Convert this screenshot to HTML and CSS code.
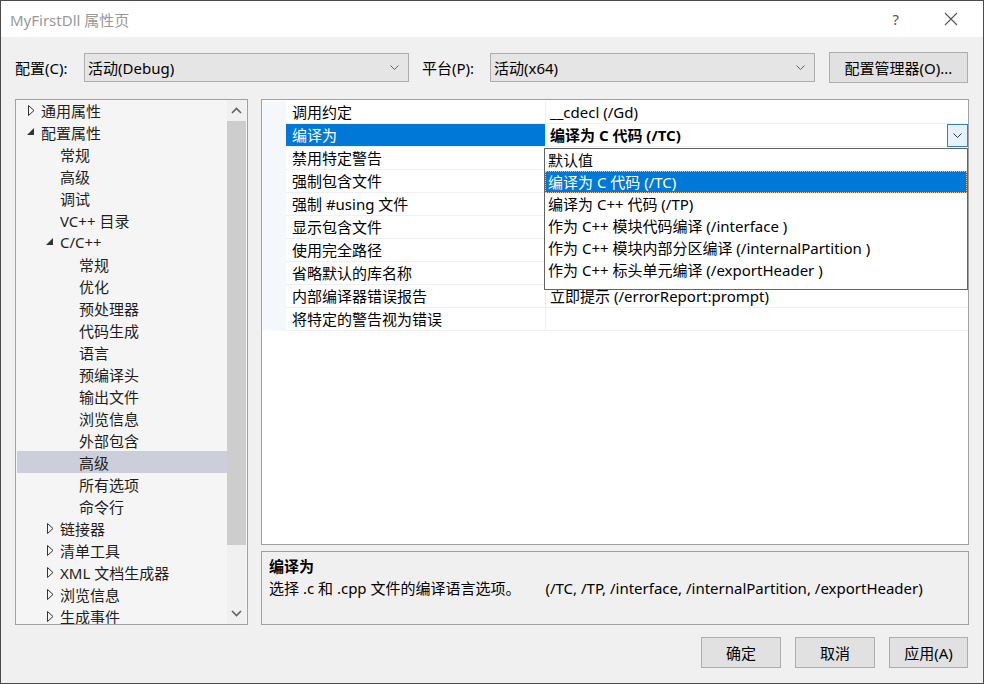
FILE: index.html
```html
<!DOCTYPE html>
<html lang="zh-CN">
<head>
  <meta charset="UTF-8">
  <title>MyFirstDll 属性页</title>
  <link rel="stylesheet" href="styles.css">
</head>
<body>
  <div class="window">
    <div class="titlebar">
      <span class="title">MyFirstDll 属性页</span>
      <span class="help">?</span>
      <svg class="close" width="14" height="14" viewBox="0 0 14 14"><path d="M1 1L13 13M13 1L1 13" stroke="#555" stroke-width="1.1" fill="none"/></svg>
    </div>

    <div class="config-row">
      <span class="label">配置(C):</span>
      <div class="combo">
        <span>活动(Debug)</span>
        <svg width="9" height="5" viewBox="0 0 9 5"><path d="M0.5 0.5L4.5 4.5L8.5 0.5" stroke="#606060" fill="none"/></svg>
      </div>
      <span class="label plat">平台(P):</span>
      <div class="combo">
        <span>活动(x64)</span>
        <svg width="9" height="5" viewBox="0 0 9 5"><path d="M0.5 0.5L4.5 4.5L8.5 0.5" stroke="#606060" fill="none"/></svg>
      </div>
      <button class="btn mgr">配置管理器(O)...</button>
    </div>

    <div class="main">
      <div class="tree">
        <ul class="tree-list">
          <li class="lvl0"><i class="tri"><svg width="7" height="11" viewBox="0 0 7 11"><path d="M0.5 0.5L6 5.5L0.5 10.5Z" stroke="#333" fill="none"/></svg></i>通用属性</li>
          <li class="lvl0"><i class="tri"><svg width="8" height="8" viewBox="0 0 8 8"><path d="M7 0L7 7L0 7Z" fill="#333"/></svg></i>配置属性</li>
          <li class="lvl1"><i class="tri"></i>常规</li>
          <li class="lvl1"><i class="tri"></i>高级</li>
          <li class="lvl1"><i class="tri"></i>调试</li>
          <li class="lvl1"><i class="tri"></i>VC++ 目录</li>
          <li class="lvl1"><i class="tri"><svg width="8" height="8" viewBox="0 0 8 8"><path d="M7 0L7 7L0 7Z" fill="#333"/></svg></i>C/C++</li>
          <li class="lvl2"><i class="tri"></i>常规</li>
          <li class="lvl2"><i class="tri"></i>优化</li>
          <li class="lvl2"><i class="tri"></i>预处理器</li>
          <li class="lvl2"><i class="tri"></i>代码生成</li>
          <li class="lvl2"><i class="tri"></i>语言</li>
          <li class="lvl2"><i class="tri"></i>预编译头</li>
          <li class="lvl2"><i class="tri"></i>输出文件</li>
          <li class="lvl2"><i class="tri"></i>浏览信息</li>
          <li class="lvl2"><i class="tri"></i>外部包含</li>
          <li class="lvl2 selected"><i class="tri"></i>高级</li>
          <li class="lvl2"><i class="tri"></i>所有选项</li>
          <li class="lvl2"><i class="tri"></i>命令行</li>
          <li class="lvl1"><i class="tri"><svg width="7" height="11" viewBox="0 0 7 11"><path d="M0.5 0.5L6 5.5L0.5 10.5Z" stroke="#333" fill="none"/></svg></i>链接器</li>
          <li class="lvl1"><i class="tri"><svg width="7" height="11" viewBox="0 0 7 11"><path d="M0.5 0.5L6 5.5L0.5 10.5Z" stroke="#333" fill="none"/></svg></i>清单工具</li>
          <li class="lvl1"><i class="tri"><svg width="7" height="11" viewBox="0 0 7 11"><path d="M0.5 0.5L6 5.5L0.5 10.5Z" stroke="#333" fill="none"/></svg></i>XML 文档生成器</li>
          <li class="lvl1"><i class="tri"><svg width="7" height="11" viewBox="0 0 7 11"><path d="M0.5 0.5L6 5.5L0.5 10.5Z" stroke="#333" fill="none"/></svg></i>浏览信息</li>
          <li class="lvl1"><i class="tri"><svg width="7" height="11" viewBox="0 0 7 11"><path d="M0.5 0.5L6 5.5L0.5 10.5Z" stroke="#333" fill="none"/></svg></i>生成事件</li>
        </ul>
        <div class="scrollbar">
          <div class="arrow">
            <svg width="11" height="7" viewBox="0 0 11 7"><path d="M1 6L5.5 1.5L10 6" stroke="#606060" stroke-width="1.6" fill="none"/></svg>
          </div>
          <div class="thumb"></div>
          <div class="track"></div>
          <div class="arrow">
            <svg width="11" height="7" viewBox="0 0 11 7"><path d="M1 1L5.5 5.5L10 1" stroke="#606060" stroke-width="1.6" fill="none"/></svg>
          </div>
        </div>
      </div>

      <div class="right">
        <div class="grid">
          <div class="prop"><div class="strip"></div><div class="name">调用约定</div><div class="value">__cdecl (/Gd)</div></div>
          <div class="prop active">
            <div class="strip"></div>
            <div class="name">编译为</div>
            <div class="value">
              <span>编译为 C 代码 (/TC)</span>
              <span class="drop-btn"><svg width="9" height="5" viewBox="0 0 9 5"><path d="M0.5 0.5L4.5 4.5L8.5 0.5" stroke="#333" fill="none"/></svg></span>
            </div>
          </div>
          <div class="prop"><div class="strip"></div><div class="name">禁用特定警告</div><div class="value"></div></div>
          <div class="prop"><div class="strip"></div><div class="name">强制包含文件</div><div class="value"></div></div>
          <div class="prop"><div class="strip"></div><div class="name">强制 #using 文件</div><div class="value"></div></div>
          <div class="prop"><div class="strip"></div><div class="name">显示包含文件</div><div class="value"></div></div>
          <div class="prop"><div class="strip"></div><div class="name">使用完全路径</div><div class="value"></div></div>
          <div class="prop"><div class="strip"></div><div class="name">省略默认的库名称</div><div class="value"></div></div>
          <div class="prop"><div class="strip"></div><div class="name">内部编译器错误报告</div><div class="value">立即提示 (/errorReport:prompt)</div></div>
          <div class="prop"><div class="strip"></div><div class="name">将特定的警告视为错误</div><div class="value"></div></div>

          <ul class="dropdown">
            <li>默认值</li>
            <li class="selected">编译为 C 代码 (/TC)</li>
            <li>编译为 C++ 代码 (/TP)</li>
            <li>作为 C++ 模块代码编译 (/interface )</li>
            <li>作为 C++ 模块内部分区编译 (/internalPartition )</li>
            <li>作为 C++ 标头单元编译 (/exportHeader )</li>
          </ul>
        </div>

        <div class="desc">
          <div class="desc-title">编译为</div>
          <div class="desc-text"><span>选择 .c 和 .cpp 文件的编译语言选项。</span><span class="flags">(/TC, /TP, /interface, /internalPartition, /exportHeader)</span></div>
        </div>
      </div>
    </div>

    <div class="buttons">
      <button class="btn">确定</button>
      <button class="btn">取消</button>
      <button class="btn apply">应用(A)</button>
    </div>
  </div>
</body>
</html>
```

FILE: styles.css
```css
* {
  box-sizing: border-box;
}
body {
  margin: 0;
  background: #f0f0f0;
  font-family: "Noto Sans", "Noto Sans CJK SC", sans-serif;
  font-size: 15px;
  color: #000;
}
.window {
  width: 984px;
  height: 684px;
  border: 1px solid #4a4a4a;
  background: #f0f0f0;
  display: flex;
  flex-direction: column;
}
.titlebar {
  height: 36px;
  background: #fff;
  display: flex;
  align-items: center;
  padding: 0 25px 0 9px;
}
.title {
  font-size: 15px;
  color: #999;
  flex: 1;
}
.help {
  font-size: 15px;
  color: #555;
  margin-right: 45px;
}
.close {
  display: block;
}
.config-row {
  display: flex;
  align-items: center;
  height: 31px;
  margin-top: 15px;
  padding-left: 14px;
}
.label {
  width: 69px;
}
.label.plat {
  width: 68px;
  margin-left: 13px;
}
.combo {
  width: 325px;
  height: 29px;
  background: #e5e5e5;
  border: 1px solid #adadad;
  display: flex;
  align-items: center;
  justify-content: space-between;
  padding: 0 9px 0 3px;
}
.combo svg {
  display: block;
}
.btn {
  font-family: inherit;
  font-size: 15px;
  color: #000;
  background: #e1e1e1;
  border: 1px solid #adadad;
  height: 31px;
  width: 80px;
  padding: 0;
}
.btn.mgr {
  width: 139px;
  margin-left: 14px;
}
.main {
  display: flex;
  height: 526px;
  margin-top: 16px;
  padding-left: 14px;
}
.tree {
  width: 233px;
  border: 1px solid #a0a0a0;
  background: #f5f5f5;
  display: flex;
  padding: 0 1px 0 1px;
  overflow: hidden;
}
.tree-list {
  list-style: none;
  margin: -1px 0 0 0;
  padding: 0;
  flex: 1;
}
.tree-list li {
  height: 22px;
  display: flex;
  align-items: center;
  white-space: nowrap;
  color: #1e1e1e;
}
.tree-list .tri {
  width: 12px;
  margin-right: 4px;
  display: flex;
  align-items: center;
  justify-content: center;
}
.tree-list .tri svg {
  display: block;
}
.lvl0 {
  padding-left: 8px;
}
.lvl1 {
  padding-left: 27px;
}
.lvl2 {
  padding-left: 46px;
}
.tree-list li.selected {
  background: #cccedb;
}
.scrollbar {
  width: 19px;
  display: flex;
  flex-direction: column;
  background: #f0f0f0;
}
.scrollbar .arrow {
  height: 21px;
  display: flex;
  align-items: center;
  justify-content: center;
}
.scrollbar .thumb {
  height: 424px;
  background: #cdcdcd;
}
.scrollbar .track {
  flex: 1;
}
.right {
  width: 708px;
  margin-left: 13px;
  display: flex;
  flex-direction: column;
}
.grid {
  position: relative;
  height: 447px;
  border: 1px solid #a0a0a0;
  background: #fff;
  padding-top: 1px;
}
.prop {
  display: flex;
  height: 23px;
}
.prop .strip {
  width: 24px;
  background: #f4f7fc;
}
.prop .name {
  width: 259px;
  padding-left: 6px;
  line-height: 22px;
  border-bottom: 1px solid #eef0f4;
  white-space: nowrap;
}
.prop .value {
  flex: 1;
  padding-left: 4px;
  line-height: 22px;
  border-bottom: 1px solid #eef0f4;
  border-left: 1px solid #eef0f4;
  display: flex;
  justify-content: space-between;
  white-space: nowrap;
}
.prop.active .name {
  background: #0078d7;
  color: #fff;
}
.prop.active .value {
  font-weight: bold;
  padding-right: 0;
}
.drop-btn {
  width: 21px;
  height: 23px;
  border: 1px solid #3c7fb1;
  background: #e5f1fb;
  display: flex;
  align-items: center;
  justify-content: center;
}
.dropdown {
  position: absolute;
  left: 282px;
  top: 48px;
  width: 424px;
  height: 142px;
  margin: 0;
  padding: 0;
  list-style: none;
  background: #fff;
  border: 1px solid #646464;
}
.dropdown li {
  height: 22px;
  line-height: 22px;
  padding-left: 3px;
  white-space: nowrap;
}
.dropdown li.selected {
  background: #0078d7;
  color: #fff;
  outline: 1px dotted #f0c080;
  outline-offset: -1px;
}
.desc {
  height: 74px;
  margin-top: 6px;
  border: 1px solid #a0a0a0;
  background: #f0f0f0;
  padding: 3px 7px;
}
.desc-title {
  font-weight: bold;
  line-height: 22px;
}
.desc-text {
  line-height: 22px;
  white-space: nowrap;
}
.desc-text .flags {
  margin-left: 25px;
}
.buttons {
  display: flex;
  justify-content: flex-end;
  gap: 14px;
  margin-top: 12px;
  padding-right: 15px;
}
.btn.apply {
  width: 79px;
}
```
